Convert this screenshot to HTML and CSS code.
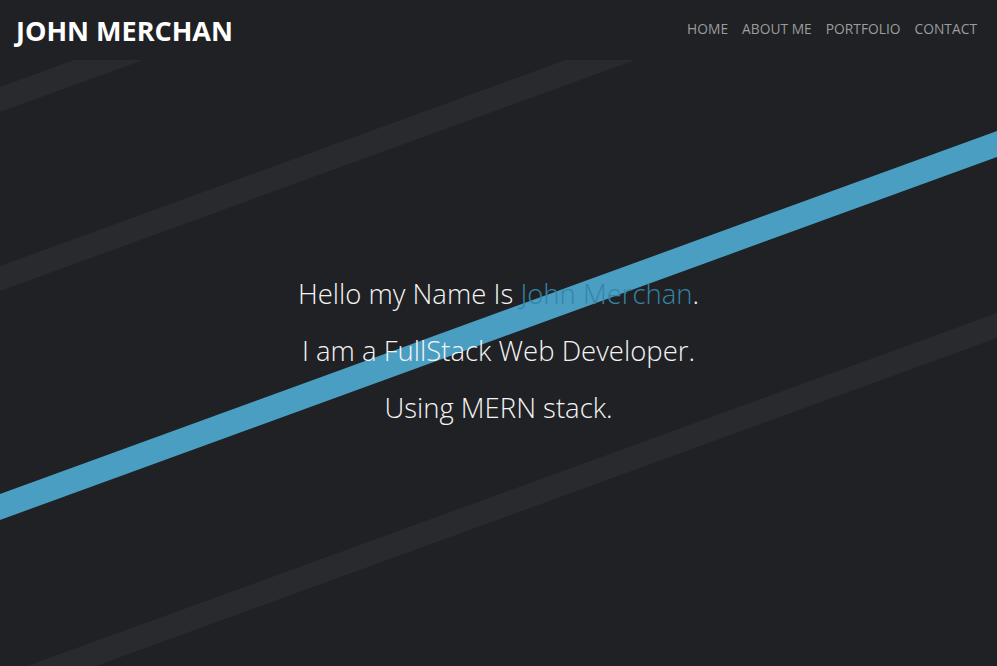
FILE: index.html
```html
<!DOCTYPE html>
<html lang="en">
<head>
<meta charset="utf-8">
<title>John Merchan</title>
<link rel="stylesheet" href="styles.css">
</head>
<body>
<div class="page">
  <svg class="stripes" viewBox="0 0 997 666" preserveAspectRatio="none" aria-hidden="true">
    <polygon class="stripe-gray" points="0,87 0,112 308,0 239,0"/>
    <polygon class="stripe-gray" points="0,266 0,291 800,0 730,0"/>
    <polygon class="stripe-gray" points="997,313 997,338 96,666 27,666"/>
    <polygon class="stripe-blue" points="0,494 997,131 997,157 0,520"/>
  </svg>
  <header class="topbar">
    <div class="brand">JOHN MERCHAN</div>
    <nav class="nav">
      <a href="#" class="nav-link">HOME</a>
      <a href="#" class="nav-link">ABOUT ME</a>
      <a href="#" class="nav-link">PORTFOLIO</a>
      <a href="#" class="nav-link">CONTACT</a>
    </nav>
  </header>
  <main class="hero">
    <p class="hero-line">Hello my Name Is <span class="accent">John Merchan</span>.</p>
    <p class="hero-line">I am a FullStack Web Developer.</p>
    <p class="hero-line">Using MERN stack.</p>
  </main>
</div>
</body>
</html>
```

FILE: styles.css
```css
html, body {
  margin: 0;
  padding: 0;
  background: #202124;
}

body {
  font-family: "Open Sans", "Noto Sans", sans-serif;
  color: #ffffff;
  overflow: hidden;
}

.page {
  position: relative;
  width: 100%;
  height: 666px;
  overflow: hidden;
}

.stripes {
  position: absolute;
  inset: 0;
  width: 100%;
  height: 100%;
  z-index: 0;
}

.stripe-gray {
  fill: #292a2e;
}

.stripe-blue {
  fill: #4a9ec2;
}

.topbar {
  position: relative;
  z-index: 2;
  height: 60px;
  background: #202124;
  display: flex;
  align-items: center;
  justify-content: space-between;
  padding: 0 20px 0 16px;
  box-sizing: border-box;
}

.brand {
  font-size: 27px;
  font-weight: 700;
  color: #ffffff;
  letter-spacing: 0;
}

.nav {
  display: flex;
  gap: 14px;
  margin-top: -3px;
}

.nav-link {
  color: #9b9c9e;
  text-decoration: none;
  font-size: 13.8px;
}

.hero {
  position: relative;
  z-index: 1;
  padding-top: 205px;
  text-align: center;
}

.hero-line {
  margin: 0;
  font-size: 27.5px;
  font-weight: 300;
  line-height: 57px;
  color: #f4f4f4;
}

.accent {
  color: #3584a8;
}
```
